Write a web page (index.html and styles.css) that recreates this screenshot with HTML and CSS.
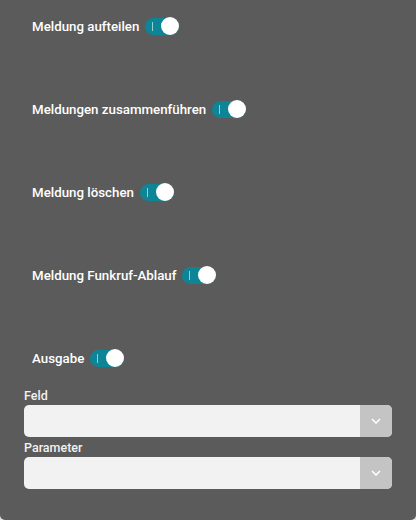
FILE: index.html
```html
<!DOCTYPE html>
<html lang="de">
<head>
<meta charset="utf-8">
<link rel="stylesheet" href="styles.css">
</head>
<body>
<div class="panel">
  <div class="toggles">
    <div class="row"><span class="label">Meldung aufteilen</span><span class="switch"><span class="mark"></span><span class="knob"></span></span></div>
    <div class="row"><span class="label">Meldungen zusammenführen</span><span class="switch"><span class="mark"></span><span class="knob"></span></span></div>
    <div class="row"><span class="label">Meldung löschen</span><span class="switch"><span class="mark"></span><span class="knob"></span></span></div>
    <div class="row"><span class="label">Meldung Funkruf-Ablauf</span><span class="switch"><span class="mark"></span><span class="knob"></span></span></div>
    <div class="row"><span class="label">Ausgabe</span><span class="switch"><span class="mark"></span><span class="knob"></span></span></div>
  </div>
  <div class="fields">
    <div class="field">
      <div class="flabel">Feld</div>
      <div class="select"><span class="value"></span><span class="arrow"><svg width="10" height="6" viewBox="0 0 10 6"><path d="M1 1 L5 5 L9 1" fill="none" stroke="#fff" stroke-width="1.6"/></svg></span></div>
    </div>
    <div class="field">
      <div class="flabel">Parameter</div>
      <div class="select"><span class="value"></span><span class="arrow"><svg width="10" height="6" viewBox="0 0 10 6"><path d="M1 1 L5 5 L9 1" fill="none" stroke="#fff" stroke-width="1.6"/></svg></span></div>
    </div>
  </div>
</div>
</body>
</html>
```
FILE: styles.css
```css
html, body {
  margin: 0;
  padding: 0;
  background: #e6e6e6;
}
.panel {
  width: 416px;
  height: 520px;
  box-sizing: border-box;
  background: #5b5b5b;
  border-radius: 0 0 5px 5px;
  padding: 16px 24px 0 24px;
  font-family: Roboto, "Liberation Sans", sans-serif;
  font-weight: 500;
}
.toggles {
  display: flex;
  flex-direction: column;
  gap: 63px;
  padding-left: 8px;
}
.row {
  display: flex;
  align-items: center;
  height: 20px;
  gap: 6px;
}
.label {
  color: #ffffff;
  font-size: 13.3px;
}
.switch {
  position: relative;
  width: 34px;
  height: 17px;
  border-radius: 9px;
  background: #0d8597;
}
.mark {
  position: absolute;
  left: 7px;
  top: 4px;
  width: 1px;
  height: 9px;
  background: #8fd0da;
}
.knob {
  position: absolute;
  right: 0;
  top: -0.5px;
  width: 18px;
  height: 18px;
  border-radius: 50%;
  background: #ffffff;
}
.fields {
  margin-top: 20px;
  display: flex;
  flex-direction: column;
  gap: 3px;
}
.flabel {
  color: #f2f2f2;
  font-size: 12.5px;
  line-height: 16px;
  margin-bottom: 1px;
}
.select {
  display: flex;
  height: 32px;
  border-radius: 5px;
  overflow: hidden;
  background: #f2f2f2;
}
.value {
  flex: 1;
}
.arrow {
  width: 32px;
  background: #c4c4c4;
  display: flex;
  align-items: center;
  justify-content: center;
}
```
